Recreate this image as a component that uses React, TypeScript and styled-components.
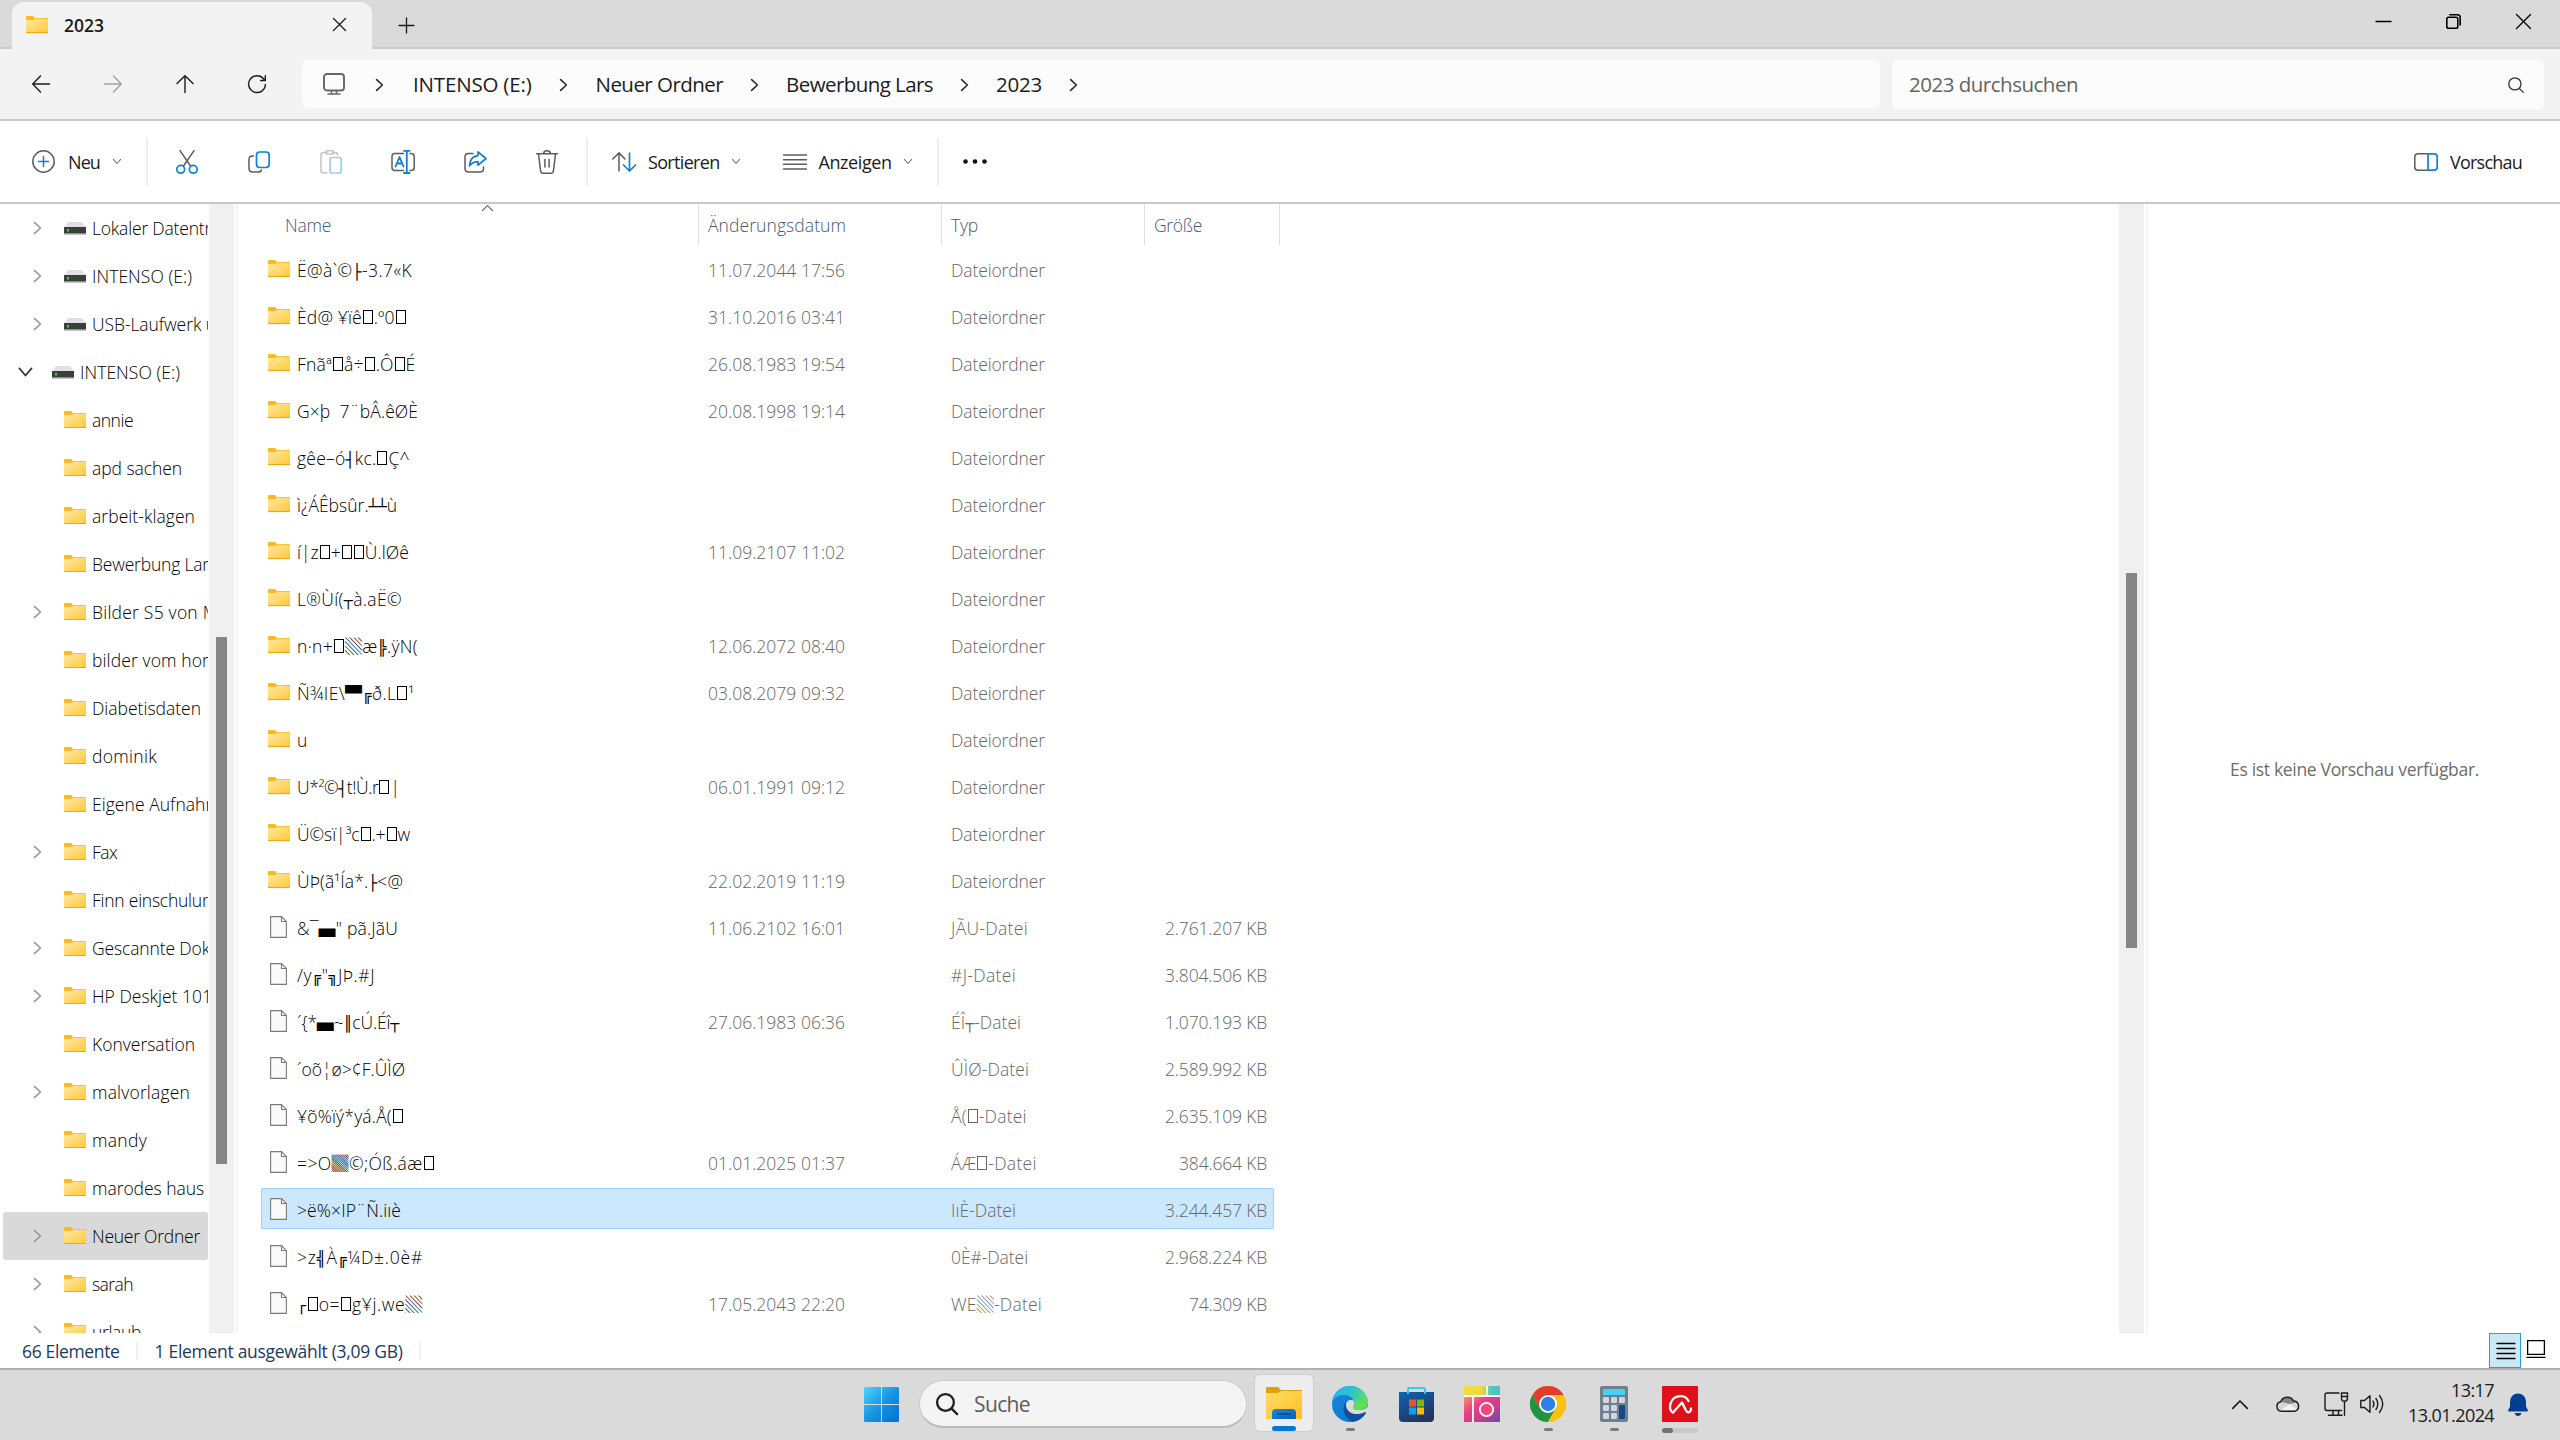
import React, { useLayoutEffect, useRef } from 'react';
import styled, { createGlobalStyle } from 'styled-components';

const UI_FONT = `"Open Sans", "Noto Sans", "Noto Sans CJK JP", sans-serif`;

const Global = createGlobalStyle`
  *, *::before, *::after { box-sizing: border-box; }
  html, body { margin: 0; padding: 0; }
  body { font-family: ${UI_FONT}; background: #fff; overflow: hidden; }
`;

/* ---------- text ---------- */

const Label = styled.span<{ $size: number; $color: string; $weight?: number; $drop?: number }>`
  display: inline-block;
  flex: none;
  white-space: pre;
  font-size: ${(p) => p.$size}px;
  line-height: 1.36;
  font-weight: ${(p) => p.$weight ?? 400};
  color: ${(p) => p.$color};
  margin-top: ${(p) => (p.$drop ?? 0) * 2}px;
`;

const Tofu = styled.span`
  display: inline-block;
  width: 10px;
  height: 14px;
  margin: 0 1px;
  border: 1px solid currentColor;
`;

const LineGlyph = styled.span`
  font-family: "DejaVu Sans Mono", monospace;
  font-size: 15px;
  line-height: 1;
`;

const BlockGlyph = styled.span`
  font-family: "Noto Sans CJK JP", sans-serif;
  font-size: 17px;
  line-height: 1;
`;

const renderGlyphs = (text: string) =>
  Array.from(text).map((ch, i) => {
    if (ch === '□') return <Tofu key={i} />;
    if ('├┤┴┬╠╣╔╗║┌'.includes(ch)) return <LineGlyph key={i}>{ch}</LineGlyph>;
    if ('▀▄▒▓'.includes(ch)) return <BlockGlyph key={i}>{ch}</BlockGlyph>;
    return ch;
  });

interface TextProps {
  children: string;
  size?: number;
  color?: string;
  weight?: number;
  width?: number;
  drop?: number;
}

/* Tracks the letters so that the string takes exactly the given advance width. */
const Text = ({ children, size = 18, color = '#1b1b1b', weight, width, drop }: TextProps) => {
  const ref = useRef<HTMLSpanElement>(null);
  useLayoutEffect(() => {
    const el = ref.current;
    if (!el || !width) return;
    el.style.letterSpacing = '0px';
    el.style.width = 'auto';
    const natural = el.getBoundingClientRect().width;
    el.style.letterSpacing = `${(width - natural) / Array.from(children).length}px`;
    el.style.width = `${width}px`;
  }, [children, width]);
  return (
    <Label ref={ref} $size={size} $color={color} $weight={weight} $drop={drop}>
      {renderGlyphs(children)}
    </Label>
  );
};

/* ---------- icons ---------- */

const Svg = styled.svg`
  display: block;
  flex: none;
  overflow: visible;
`;

interface GlyphProps {
  w: number;
  h: number;
  color?: string;
  sw?: number;
  children: React.ReactNode;
}
const Glyph = ({ w, h, color = '#1b1b1b', sw = 1.5, children }: GlyphProps) => (
  <Svg width={w} height={h} viewBox={`0 0 ${w} ${h}`} fill="none" stroke={color} strokeWidth={sw} strokeLinecap="round" strokeLinejoin="round">
    {children}
  </Svg>
);

const BLUE = '#0f7fd8';
const GREY = '#5c5c5c';

const FolderIcon = () => (
  <Svg width="22" height="18" viewBox="0 0 22 18">
    <defs>
      <linearGradient id="fold" x1="0" y1="0" x2="1" y2="1">
        <stop offset="0" stopColor="#ffe9a2" />
        <stop offset="1" stopColor="#ffc937" />
      </linearGradient>
    </defs>
    <path d="M0 1Q0 0 1 0H7L9 2H22V8H0Z" fill="#fdb81e" />
    <path d="M0 4H7L9 2.8H22V17H0Z" fill="url(#fold)" />
    <path d="M0 16.5H22" stroke="#eea820" strokeWidth="1.2" />
  </Svg>
);

const DriveIcon = () => (
  <Svg width="22" height="13" viewBox="0 0 22 13">
    <path d="M4 0H18L22 5H0Z" fill="#dfe1e4" />
    <rect y="5" width="22" height="7" fill="#3d3d3d" />
    <rect y="11" width="22" height="1.5" fill="#8e8e8e" />
    <rect x="3" y="7" width="2" height="2.5" fill="#2bdc3a" />
  </Svg>
);

const FileIcon = () => (
  <Svg width="17" height="22" viewBox="0 0 17 22" fill="#fafafa" stroke="#7a7a7a" strokeWidth="1.1">
    <path d="M.6 .6H11.5L16.4 5.5V21.4H.6Z" />
    <path d="M11.5 .6V5.5H16.4" fill="none" />
  </Svg>
);

const ChevronRight = ({ color = '#2a2a2a', w = 7, h = 12, sw = 1.6 }: { color?: string; w?: number; h?: number; sw?: number }) => (
  <Glyph w={w} h={h} color={color} sw={sw}>
    <path d={`M.6 .6L${w - 0.6} ${h / 2}L.6 ${h - 0.6}`} />
  </Glyph>
);

const ChevronDown = ({ color = '#777', w = 8, h = 5, sw = 1.1 }: { color?: string; w?: number; h?: number; sw?: number }) => (
  <Glyph w={w} h={h} color={color} sw={sw}>
    <path d={`M.4 .4L${w / 2} ${h - 0.5}L${w - 0.4} .4`} />
  </Glyph>
);

const SearchGlass = ({ size, sw, color }: { size: number; sw: number; color: string }) => (
  <Glyph w={size} h={size} sw={sw} color={color}>
    <circle cx={size * 0.43} cy={size * 0.43} r={size * 0.38} />
    <path d={`M${size * 0.71} ${size * 0.71}L${size * 0.96} ${size * 0.96}`} />
  </Glyph>
);

/* ---------- frame ---------- */

const Screen = styled.div`
  width: 2560px;
  height: 1440px;
  display: flex;
  flex-direction: column;
  overflow: hidden;
  background: #fff;
`;

const TitleBar = styled.header`
  height: 49px;
  flex: none;
  display: flex;
  align-items: stretch;
  background: linear-gradient(#cacaca, #cacaca) bottom / 100% 2px no-repeat #dadada;
`;

const Tab = styled.div`
  margin: 2px 0 0 12px;
  width: 360px;
  display: flex;
  align-items: center;
  padding: 0 26px 2px 14px;
  border-radius: 12px 12px 0 0;
  background: #f3f3f3;
`;

const TabTitle = styled.div`
  flex: 1;
  margin-left: 16px;
  display: flex;
`;

const NewTab = styled.div`
  flex: 1;
  display: flex;
  align-items: center;
  padding: 2px 0 0 27px;
`;

const WindowControls = styled.div`
  display: flex;
  align-items: center;
  gap: 55px;
  padding: 0 29px 6px 0;
`;

const NavBar = styled.nav`
  height: 72px;
  flex: none;
  display: flex;
  align-items: center;
  padding: 0 16px 0 32px;
  background: #f3f3f3;
  border-bottom: 2px solid #c8c8c8;
`;

const NavArrows = styled.div`
  width: 270px;
  display: flex;
  gap: 54px;
`;

const AddressBar = styled.div`
  width: 1578px;
  height: 48px;
  display: flex;
  align-items: center;
  padding-left: 21px;
  border-radius: 6px;
  background: #fcfcfc;
`;

const Crumb = styled.div<{ $gap: number; $lead: number }>`
  display: flex;
  align-items: center;
  gap: ${(p) => p.$gap}px;
  margin-left: ${(p) => p.$lead}px;
  padding-top: 2px;
`;

const SearchField = styled.div`
  margin-left: 12px;
  width: 652px;
  height: 49px;
  display: flex;
  align-items: center;
  justify-content: space-between;
  padding: 2px 20px 0 17px;
  border-radius: 6px;
  background: #fcfcfc;
`;

const Toolbar = styled.div`
  height: 83px;
  flex: none;
  display: flex;
  align-items: center;
  padding: 0 38px 0 32px;
  border-bottom: 2px solid #c8c8c8;
  background: #fff;
`;

const MenuButton = styled.div<{ $lead?: number; $gap?: number }>`
  display: flex;
  align-items: center;
  gap: ${(p) => p.$gap ?? 12}px;
  margin-left: ${(p) => p.$lead ?? 0}px;
`;

const ToolButton = styled.div`
  width: 72px;
  display: flex;
  justify-content: center;
`;

const Divider = styled.div<{ $before: number; $after: number }>`
  width: 2px;
  height: 48px;
  margin: 0 ${(p) => p.$after}px 0 ${(p) => p.$before}px;
  background: #eeeeee;
`;

const Grow = styled.div`
  flex: 1;
`;

const Body = styled.main`
  height: 1129px;
  flex: none;
  display: flex;
  overflow: hidden;
`;

/* ---------- tree ---------- */

const Tree = styled.aside`
  width: 209px;
  overflow: hidden;
`;

const TreeRow = styled.div<{ $root?: boolean; $selected?: boolean }>`
  height: 48px;
  width: 205px;
  margin-left: 3px;
  display: flex;
  align-items: center;
  padding-left: ${(p) => (p.$root ? 16 : 31)}px;
  border-radius: 3px;
  overflow: hidden;
  background: ${(p) => (p.$selected ? '#d9d9d9' : 'transparent')};
`;

const TreeToggle = styled.div<{ $root?: boolean }>`
  width: ${(p) => (p.$root ? 33 : 30)}px;
  flex: none;
`;

const TreeIcon = styled.div`
  width: 28px;
  flex: none;
`;

const Track = styled.div<{ $w: number; $pad: number; $top: number }>`
  width: ${(p) => p.$w}px;
  flex: none;
  padding: ${(p) => p.$top}px ${(p) => p.$pad}px 0;
  background: #f0f0f0;
`;

const Thumb = styled.div<{ $h: number }>`
  width: 11px;
  height: ${(p) => p.$h}px;
  background: #858585;
`;

const Splitter = styled.div`
  width: 2px;
  flex: none;
  margin-left: 2px;
  background: #f5f5f5;
`;

/* ---------- list ---------- */

const List = styled.section`
  width: 1881px;
  flex: none;
  display: flex;
  flex-direction: column;
`;

const HeaderRow = styled.div`
  height: 44px;
  flex: none;
  display: flex;
`;

const HeaderCell = styled.div<{ $w: number; $pad: number }>`
  width: ${(p) => p.$w}px;
  height: 41px;
  display: flex;
  align-items: center;
  padding-left: ${(p) => p.$pad}px;
  border-right: 1px solid #e0e0e0;
`;

const SortMark = styled.div`
  align-self: flex-start;
  margin: 1px 0 0 151px;
`;

const Row = styled.div<{ $selected?: boolean }>`
  width: 1013px;
  height: 41px;
  flex: none;
  margin: 0 0 6px 23px;
  display: grid;
  grid-template-columns: 36px 411px 243px 213px 1fr;
  align-items: center;
  border-radius: 2px;
  background: ${(p) => (p.$selected ? '#cce8ff' : 'transparent')};
  box-shadow: ${(p) => (p.$selected ? 'inset 0 0 0 1px #99d1ff' : 'none')};
`;

const RowIcon = styled.div<{ $file?: boolean }>`
  padding-left: ${(p) => (p.$file ? 9 : 7)}px;
`;

const Cell = styled.div`
  height: 41px;
  display: flex;
  align-items: center;
`;

const PreviewPane = styled.section`
  flex: 1;
  display: flex;
  align-items: center;
  justify-content: center;
  padding-left: 1px;
`;

/* ---------- status ---------- */

const StatusBar = styled.footer`
  height: 35px;
  flex: none;
  display: flex;
  align-items: center;
  padding: 0 15px 0 22px;
`;

const StatusRule = styled.div`
  width: 2px;
  height: 18px;
  margin: 0 17px 0 16px;
  background: #f0f0f0;
`;

const DetailsToggle = styled.div`
  width: 32px;
  height: 35px;
  display: flex;
  align-items: center;
  justify-content: center;
  padding: 1px 0 0 1px;
  border: 1px solid #26a0da;
  background: #cbe8f6;
`;

const TilesToggle = styled.div`
  width: 18px;
  margin-left: 6px;
  padding-bottom: 3px;
`;

/* ---------- taskbar ---------- */

const Taskbar = styled.footer`
  height: 72px;
  flex: none;
  display: flex;
  align-items: flex-start;
  padding: 0 32px 0 864px;
  border-top: 2px solid #b0b0b0;
  background: #dadada;
`;

const StartButton = styled.div`
  padding-top: 17px;
`;

const SearchPill = styled.div`
  margin: 10px 0 0 20px;
  width: 328px;
  height: 48px;
  display: flex;
  align-items: center;
  gap: 16px;
  padding: 1px 0 0 16px;
  border-radius: 24px;
  border: 1px solid #cbcbcb;
  border-bottom: 2px solid #b9b9b9;
  background: #f4f4f4;
`;

const Apps = styled.div`
  display: flex;
  margin-left: 7px;
  padding-top: 4px;
`;

const AppSlot = styled.div<{ $active?: boolean }>`
  width: 60px;
  height: 58px;
  margin-right: 6px;
  display: flex;
  flex-direction: column;
  align-items: center;
  justify-content: flex-start;
  padding-top: 11px;
  border-radius: 6px;
  border: 1.5px solid ${(p) => (p.$active ? '#cfcfcf' : 'transparent')};
  background: ${(p) => (p.$active ? '#ededed' : 'transparent')};
  background-clip: padding-box;
`;

const AppArt = styled.div`
  height: 36px;
  display: flex;
  align-items: center;
`;

const Running = styled.div<{ $w: number; $color: string }>`
  width: ${(p) => p.$w}px;
  height: 5px;
  margin-top: 6px;
  border-radius: 3px;
  background: ${(p) => p.$color};
`;

const RunningGroup = styled.div`
  width: 36px;
  height: 5px;
  margin-top: 6px;
  border-radius: 3px;
  background: #c9c9c9;
`;

const RunningActive = styled.div`
  width: 11px;
  height: 5px;
  border-radius: 3px;
  background: #717171;
`;

const Tray = styled.div`
  flex: 1;
  height: 70px;
  display: flex;
  align-items: center;
  justify-content: flex-end;
`;

const TrayItem = styled.div<{ $after: number; $up?: number }>`
  margin-right: ${(p) => p.$after}px;
  padding-bottom: ${(p) => p.$up ?? 2}px;
`;

const Clock = styled.div`
  width: 86px;
  display: flex;
  flex-direction: column;
  align-items: flex-end;
  padding-bottom: 5px;
`;

const BellFrame = styled.div`
  margin-left: 14px;
  padding-bottom: 2px;
`;

/* ---------- app icons ---------- */

const WindowsLogo = () => (
  <Svg width="35" height="35" viewBox="0 0 35 35">
    <defs>
      <linearGradient id="win" gradientUnits="userSpaceOnUse" x1="0" y1="0" x2="35" y2="35">
        <stop offset="0" stopColor="#4fd3ff" />
        <stop offset=".5" stopColor="#1795e0" />
        <stop offset="1" stopColor="#0070d1" />
      </linearGradient>
    </defs>
    <g fill="url(#win)">
      <path d="M1.5 0H17V17H0V1.5Q0 0 1.5 0Z" />
      <path d="M18 0H33.5Q35 0 35 1.5V17H18Z" />
      <path d="M0 18H17V35H1.5Q0 35 0 33.5Z" />
      <path d="M18 18H35V33.5Q35 35 33.5 35H18Z" />
    </g>
  </Svg>
);

const ExplorerApp = () => (
  <Svg width="36" height="33" viewBox="0 0 36 33">
    <defs>
      <linearGradient id="expBack" x1="0" y1="0" x2="1" y2="1">
        <stop offset="0" stopColor="#ffdc6b" />
        <stop offset="1" stopColor="#ffc01e" />
      </linearGradient>
      <linearGradient id="expBlue" x1="0" y1="0" x2="1" y2="1">
        <stop offset="0" stopColor="#1b8ad8" />
        <stop offset="1" stopColor="#0a5fb4" />
      </linearGradient>
    </defs>
    <path d="M0 1Q0 0 1 0H12L15 3H36V8H0Z" fill="#e0a00a" />
    <path d="M0 6H12L15 4H36V32H0Z" fill="url(#expBack)" />
    <path d="M6 32V26Q6 22 10 22H26Q30 22 30 26V32Z" fill="url(#expBlue)" />
    <path d="M11 27H25" stroke="#0a4a8c" strokeWidth="1.6" />
  </Svg>
);

const EdgeApp = () => (
  <Svg width="36" height="36" viewBox="0 0 36 36">
    <defs>
      <linearGradient id="edTop" x1="0" y1=".3" x2="1" y2=".6">
        <stop offset="0" stopColor="#2ab4f2" />
        <stop offset=".5" stopColor="#2cc3cf" />
        <stop offset="1" stopColor="#6be34b" />
      </linearGradient>
      <linearGradient id="edMid" x1="0" y1="0" x2=".5" y2="1">
        <stop offset="0" stopColor="#1586d8" />
        <stop offset="1" stopColor="#0b7cd6" />
      </linearGradient>
    </defs>
    <circle cx="18" cy="18" r="18" fill="url(#edMid)" />
    <path d="M0 17C1 7 9 0 18 0C28 0 36 8 36 16C36 21 32 24 27 24C23 24 21 23 21 21.5C21 20.5 22.5 20 22.5 17.5C22 12 17 9 11 9C5 9 1 13 0 17Z" fill="url(#edTop)" />
    <path d="M14 16C9 22 12 31 20 35.7C26 35.5 31 32 33.5 27.5C34 26.5 33.4 26 32.5 26.5C25 30 15 27 14 19Z" fill="#114f9c" />
    <path d="M22 15C18 12.5 14 15 14 19C14 25 20 28.5 26 28C29 27.7 31 27 33 26C34 26 34.5 26.5 36 25L36 20C34 23 31 24 27 24C23 24 21 23 21 21.5C21 20.5 23 19 22 15Z" fill="#dadada" />
    <path d="M36 16C36 21 32 24 27 24C23 24 21 23 21 21.5C21 20.5 22.5 20 22.5 17.5L28 14Z" fill="#5fdf55" />
  </Svg>
);

const StoreApp = () => (
  <Svg width="35" height="35" viewBox="0 0 35 35">
    <defs>
      <linearGradient id="sto" x1="0" y1="0" x2=".6" y2="1">
        <stop offset="0" stopColor="#0d66b5" />
        <stop offset="1" stopColor="#22345c" />
      </linearGradient>
    </defs>
    <path d="M0 5H35V31Q35 35 31 35H4Q0 35 0 31Z" fill="url(#sto)" />
    <path d="M9 7V2Q9 1 10 1H25Q26 1 26 2V7" fill="none" stroke="#3cc4f4" strokeWidth="2" />
    <rect x="10" y="12.5" width="7" height="7" fill="#f25022" />
    <rect x="18" y="12.5" width="7" height="7" fill="#7fba00" />
    <rect x="10" y="20.5" width="7" height="7" fill="#00a4ef" />
    <rect x="18" y="20.5" width="7" height="7" fill="#ffb900" />
  </Svg>
);

const CollageApp = () => (
  <Svg width="36" height="36" viewBox="0 0 36 36">
    <defs>
      <linearGradient id="colA" x1="0" y1="0" x2="1" y2="0">
        <stop offset="0" stopColor="#f7da40" />
        <stop offset=".5" stopColor="#e8dc3c" />
        <stop offset=".75" stopColor="#4cc9be" />
        <stop offset="1" stopColor="#53bfc4" />
      </linearGradient>
      <linearGradient id="colB" x1="0" y1="0" x2="1" y2="1">
        <stop offset="0" stopColor="#f79a5e" />
        <stop offset=".35" stopColor="#ee3f86" />
        <stop offset=".65" stopColor="#c43f8b" />
        <stop offset="1" stopColor="#6a4ba8" />
      </linearGradient>
    </defs>
    <rect width="36" height="10" fill="url(#colA)" />
    <rect y="10" width="36" height="26" fill="url(#colB)" />
    <path d="M0 10H36M9 10V36M23 0V10" stroke="#fff" strokeWidth="1.8" />
    <circle cx="22.5" cy="23.5" r="6.7" fill="#f4497a" stroke="#fff" strokeWidth="1.8" />
  </Svg>
);

const ChromeApp = () => (
  <Svg width="36" height="36" viewBox="0 0 36 36">
    <circle cx="18" cy="18" r="18" fill="#fbc116" />
    <path d="M2.4 9A18 18 0 0 1 33.6 9L18 9L10.2 22.5Z" fill="#e33b2e" />
    <path d="M2.4 9A18 18 0 0 0 18 36L25.8 22.5L10.2 22.5Z" fill="#229342" />
    <path d="M33.6 9A18 18 0 0 1 18 36L25.8 22.5L18 9Z" fill="#fbc116" />
    <circle cx="18" cy="18" r="9" fill="#fff" />
    <circle cx="18" cy="18" r="7.2" fill="#2f7de9" />
  </Svg>
);

const CalcApp = () => (
  <Svg width="28" height="36" viewBox="0 0 28 36">
    <rect width="28" height="36" rx="2" fill="#70808c" />
    <rect x="3" y="3" width="22" height="6" rx="1" fill="#45d2f7" />
    <g fill="#cfd6e0">
      <rect x="3" y="11" width="6" height="6" rx="1.2" />
      <rect x="11" y="11" width="6" height="6" rx="1.2" />
      <rect x="19" y="11" width="6" height="6" rx="1.2" />
      <rect x="3" y="19" width="6" height="6" rx="1.2" />
      <rect x="11" y="19" width="6" height="6" rx="1.2" />
      <rect x="3" y="27" width="6" height="6" rx="1.2" />
      <rect x="11" y="27" width="6" height="6" rx="1.2" />
    </g>
    <rect x="19" y="19" width="6" height="14" rx="1.2" fill="#124a8c" />
  </Svg>
);

const AviraApp = () => (
  <Svg width="36" height="36" viewBox="0 0 36 36">
    <rect width="36" height="36" rx="1" fill="#e00f1a" />
    <g fill="none" stroke="#fff" strokeWidth="2.3" strokeLinecap="round" strokeLinejoin="round">
      <path d="M11 26.5C5 24 8 10.2 18.5 10.2C22.5 10.2 25 12 26.5 15" />
      <path d="M11 26.5L20 16.5L24 24.5C25.5 27.5 29 26.5 29 22.5" />
    </g>
  </Svg>
);

const BellIcon = () => (
  <BellFrame>
    <Svg width="20" height="23" viewBox="0 0 20 23" fill="#003e92">
      <path d="M2 8.5A8 8 0 0 1 18 8.5V13.5L20 17.5Q20 18.5 19 18.5H1Q0 18.5 0 17.5L2 13.5Z" />
      <path d="M6.5 20H13.5Q12.5 23 10 23Q7.5 23 6.5 20Z" />
    </Svg>
  </BellFrame>
);

/* ---------- data ---------- */

type TreeItem = { name: string; width: number; drive?: boolean; root?: boolean; toggle?: boolean; selected?: boolean };

const tree: TreeItem[] = [
  { name: 'Lokaler Datentr', width: 119, drive: true, toggle: true },
  { name: 'INTENSO (E:)', width: 100, drive: true, toggle: true },
  { name: 'USB-Laufwerk u', width: 124, drive: true, toggle: true },
  { name: 'INTENSO (E:)', width: 100, drive: true, toggle: true, root: true },
  { name: 'annie', width: 41 },
  { name: 'apd sachen', width: 90 },
  { name: 'arbeit-klagen', width: 103 },
  { name: 'Bewerbung Lar', width: 117 },
  { name: 'Bilder S5 von M', width: 126, toggle: true },
  { name: 'bilder vom hor', width: 117 },
  { name: 'Diabetisdaten', width: 109 },
  { name: 'dominik', width: 65 },
  { name: 'Eigene Aufnahm', width: 129 },
  { name: 'Fax', width: 25, toggle: true },
  { name: 'Finn einschulun', width: 120 },
  { name: 'Gescannte Dok', width: 118, toggle: true },
  { name: 'HP Deskjet 101', width: 120, toggle: true },
  { name: 'Konversation', width: 103 },
  { name: 'malvorlagen', width: 98, toggle: true },
  { name: 'mandy', width: 55 },
  { name: 'marodes haus', width: 112 },
  { name: 'Neuer Ordner', width: 108, toggle: true, selected: true },
  { name: 'sarah', width: 41, toggle: true },
  { name: 'urlaub', width: 49, toggle: true },
];

type Entry = {
  name: string;
  w: number;
  date?: string;
  type?: string;
  typeW?: number;
  size?: string;
  sizeW?: number;
  selected?: boolean;
};

const entries: Entry[] = [
  { name: 'Ë@à`©├-3.7«K', w: 115, date: '11.07.2044 17:56' },
  { name: 'Èd@ ¥ïê□.º0□', w: 110, date: '31.10.2016 03:41' },
  { name: 'Fnãª□å÷□.Ô□É', w: 119, date: '26.08.1983 19:54' },
  { name: 'G×þ  7¨bÂ.êØÈ', w: 121, date: '20.08.1998 19:14' },
  { name: 'gêe–ó┤kc.□Ç^', w: 113 },
  { name: 'ì¿ÁÊbsûr.┴┴ù', w: 100 },
  { name: 'í|z□+□□Ù.lØê', w: 112, date: '11.09.2107 11:02' },
  { name: 'L®Ùí(┬à.aË©', w: 105 },
  { name: 'n·n+□▒æ╠.ÿN(', w: 121, date: '12.06.2072 08:40' },
  { name: 'Ñ¾IE\\▀╔ð.L□¹', w: 118, date: '03.08.2079 09:32' },
  { name: 'u', w: 10 },
  { name: 'U*²©┤t!Ù.r□|', w: 102, date: '06.01.1991 09:12' },
  { name: 'Ü©sï|³c□.+□w', w: 113 },
  { name: 'ÙÞ(ã¹Ía*.├<@', w: 106, date: '22.02.2019 11:19' },
  { name: '&¯▄" pã.JãU', w: 101, date: '11.06.2102 16:01', type: 'JÃU-Datei', typeW: 77, size: '2.761.207 KB', sizeW: 102 },
  { name: '/y╔"╗JÞ.#J', w: 78, type: '#J-Datei', typeW: 65, size: '3.804.506 KB', sizeW: 102 },
  { name: '´{*▄~║cÚ.Éî┬', w: 102, date: '27.06.1983 06:36', type: 'ÉÎ┬-Datei', typeW: 70, size: '1.070.193 KB', sizeW: 102 },
  { name: '´oõ¦ø>¢F.ÛÌØ', w: 108, type: 'ÛÌØ-Datei', typeW: 78, size: '2.589.992 KB', sizeW: 102 },
  { name: '¥õ%ïý*yá.Å(□', w: 107, type: 'Å(□-Datei', typeW: 76, size: '2.635.109 KB', sizeW: 102 },
  { name: '=>O▓©;Óß.áæ□', w: 138, date: '01.01.2025 01:37', type: 'ÁÆ□-Datei', typeW: 86, size: '384.664 KB', sizeW: 88 },
  { name: '>ë%×IP¨Ñ.iıè', w: 104, type: 'IıÈ-Datei', typeW: 65, size: '3.244.457 KB', sizeW: 102, selected: true },
  { name: '>z╣À╔¼D±.0è#', w: 126, type: '0È#-Datei', typeW: 77, size: '2.968.224 KB', sizeW: 102 },
  { name: '┌□o=□g¥j.we▒', w: 127, date: '17.05.2043 22:20', type: 'WE▒-Datei', typeW: 91, size: '74.309 KB', sizeW: 78 },
];

const SizeCell = styled(Cell)`
  justify-content: flex-end;
  padding-right: 7px;
`;

const LIST_SIZE = 17.5;
const LIST_WEIGHT = 350;

/* ---------- page ---------- */

export default function App() {
  const heading = '#44597a';
  const dim = '#666';
  const status = '#1e395b';
  return (
    <Screen>
      <Global />
      <TitleBar>
        <Tab>
          <FolderIcon />
          <TabTitle>
            <Text size={17.5} weight={600} width={40} drop={1}>2023</Text>
          </TabTitle>
          <Glyph w={13} h={13} sw={1.3}><path d="M.5 .5L12.5 12.5M12.5 .5L.5 12.5" /></Glyph>
        </Tab>
        <NewTab>
          <Glyph w={15} h={15} sw={1.3}><path d="M7.5 0V15M0 7.5H15" /></Glyph>
        </NewTab>
        <WindowControls>
          <Glyph w={15} h={15} sw={1.4} color="#000"><path d="M0 7.5H15" /></Glyph>
          <Glyph w={15} h={15} sw={1.6} color="#000">
            <rect x=".8" y="3.3" width="11" height="11" rx="1.8" />
            <path d="M3.8 .8H11.5Q14.2 .8 14.2 3.5V11" />
          </Glyph>
          <Glyph w={15} h={15} sw={1.4} color="#000"><path d="M.5 .5L14.5 14.5M14.5 .5L.5 14.5" /></Glyph>
        </WindowControls>
      </TitleBar>

      <NavBar>
        <NavArrows>
          <Glyph w={18} h={18} sw={1.4}><path d="M17.5 9H.8M8.5 1L.7 9L8.5 17" /></Glyph>
          <Glyph w={18} h={18} sw={1.4} color="#a0a0a0"><path d="M.5 9H17.2M9.5 1L17.3 9L9.5 17" /></Glyph>
          <Glyph w={18} h={18} sw={1.4}><path d="M9 17.5V.8M1 8.5L9 .7L17 8.5" /></Glyph>
          <Glyph w={18} h={18} sw={1.4}>
            <path d="M17.4 9.5A8.4 8.4 0 1 1 15.5 3.8L17.3 5.5M17.3 .8V5.5H12.6" />
          </Glyph>
        </NavArrows>
        <AddressBar>
          <Glyph w={22} h={22} sw={1.9} color="#666">
            <rect x="1" y="1" width="20" height="16.5" rx="3" />
            <path d="M5 21H17M8.5 17.5V21M13.5 17.5V21" strokeWidth="1.5" />
          </Glyph>
          <Crumb $gap={30} $lead={31}>
            <ChevronRight />
            <Text size={20.5} width={118.5}>INTENSO (E:)</Text>
          </Crumb>
          <Crumb $gap={29} $lead={28}>
            <ChevronRight />
            <Text size={20.5} width={127.5}>Neuer Ordner</Text>
          </Crumb>
          <Crumb $gap={28} $lead={28}>
            <ChevronRight />
            <Text size={20.5} width={147}>Bewerbung Lars</Text>
          </Crumb>
          <Crumb $gap={28} $lead={28}>
            <ChevronRight />
            <Text size={20.5} width={46}>2023</Text>
            <ChevronRight />
          </Crumb>
        </AddressBar>
        <SearchField>
          <Text size={20.5} width={169} color="#636363">2023 durchsuchen</Text>
          <SearchGlass size={16} sw={1.3} color="#333" />
        </SearchField>
      </NavBar>

      <Toolbar>
        <MenuButton $gap={13}>
          <Glyph w={23} h={23} color={GREY} sw={1.5}>
            <circle cx="11.5" cy="11.5" r="10.7" />
            <path d="M11.5 6.5V16.5M6.5 11.5H16.5" stroke={BLUE} />
          </Glyph>
          <Text size={18} width={32} drop={1}>Neu</Text>
          <ChevronDown />
        </MenuButton>
        <Divider $before={25} $after={3} />
        <ToolButton>
          <Glyph w={22} h={24} color={GREY}>
            <path d="M4 .7L14.5 16M18 .7L7.5 16" />
            <circle cx="4.7" cy="19.3" r="3.9" stroke={BLUE} strokeWidth="1.7" />
            <circle cx="17.3" cy="19.3" r="3.9" stroke={BLUE} strokeWidth="1.7" />
          </Glyph>
        </ToolButton>
        <ToolButton>
          <Glyph w={22} h={22} color={GREY}>
            <path d="M5.5 5H4.5Q1 5 1 8.5V17.5Q1 21 4.5 21H10Q13 21 13.5 19" />
            <rect x="8.5" y="1" width="12.7" height="15.5" rx="3.2" stroke={BLUE} strokeWidth="1.7" />
          </Glyph>
        </ToolButton>
        <ToolButton>
          <Glyph w={22} h={24} color="#c4c4c4">
            <path d="M7 2.5H3.5Q1 2.5 1 5V20.5Q1 23 3.5 23H7M12.5 2.5H15Q17.5 2.5 17.5 5" />
            <rect x="5.8" y=".8" width="8" height="3.2" rx="1.6" />
            <rect x="10" y="7.5" width="11.2" height="15.5" rx="2" stroke="#9ccdf2" strokeWidth="1.7" />
          </Glyph>
        </ToolButton>
        <ToolButton>
          <Glyph w={24} h={24} color={GREY}>
            <path d="M12.5 3.5H4Q1 3.5 1 6.5V17.5Q1 20.5 4 20.5H12.5M19 3.5H20Q23.2 3.5 23.2 6.5V17.5Q23.2 20.5 20 20.5H19" />
            <path d="M4.5 16.5L8.5 7L12.5 16.5M5.8 13.5H11.2M15.8 .9V23M13 .9H18.6M13 23H18.6" stroke={BLUE} strokeWidth="1.8" />
          </Glyph>
        </ToolButton>
        <ToolButton>
          <Glyph w={23} h={22} color={GREY}>
            <path d="M9 2.5H4.5Q1 2.5 1 6V17.5Q1 21 4.5 21H16Q19.5 21 19.5 17.5V16" />
            <path d="M14 .8L22 7.5L14 14.2V10.6Q8.5 10.6 5.5 14.8Q6 5.5 14 4.6Z" stroke={BLUE} strokeWidth="1.7" />
          </Glyph>
        </ToolButton>
        <ToolButton>
          <Glyph w={22} h={24} color={GREY}>
            <path d="M.7 3.8H21.3M7.5 3.5Q8 .8 11 .8Q14 .8 14.5 3.5M2.5 4L4.6 21Q4.9 23.2 7 23.2H15Q17.1 23.2 17.4 21L19.5 4M8.9 9.5V17M13.1 9.5V17" />
          </Glyph>
        </ToolButton>
        <Divider $before={3} $after={24} />
        <MenuButton>
          <Glyph w={24} h={20} color={GREY}>
            <path d="M7 19V1M.8 7L7 .9L13 7" />
            <path d="M17.5 1V19M11.5 13L17.5 19L23.5 13" stroke={BLUE} strokeWidth="1.7" />
          </Glyph>
          <Text size={18} width={71.5} drop={1}>Sortieren</Text>
          <ChevronDown />
        </MenuButton>
        <MenuButton $lead={43}>
          <Glyph w={24} h={16} color={GREY} sw={1.4}>
            <path d="M.5 1H23.5M.5 5.7H23.5M.5 10.3H23.5M.5 15H23.5" />
          </Glyph>
          <Text size={18} width={73} drop={1}>Anzeigen</Text>
          <ChevronDown />
        </MenuButton>
        <Divider $before={25} $after={24} />
        <Svg width="24" height="5" viewBox="0 0 24 5" fill="#111">
          <circle cx="2.5" cy="2.5" r="2.3" />
          <circle cx="12" cy="2.5" r="2.3" />
          <circle cx="21.5" cy="2.5" r="2.3" />
        </Svg>
        <Grow />
        <MenuButton $gap={12}>
          <Glyph w={24} h={18} color={GREY}>
            <path d="M14 .8H4Q.8 .8 .8 4V14Q.8 17.2 4 17.2H14" />
            <path d="M14 .8H20Q23.2 .8 23.2 4V14Q23.2 17.2 20 17.2H14Z" stroke={BLUE} strokeWidth="1.7" />
          </Glyph>
          <Text size={18} width={72} drop={1}>Vorschau</Text>
        </MenuButton>
      </Toolbar>

      <Body>
        <Tree>
          {tree.map((item, i) => (
            <TreeRow key={i} $root={item.root} $selected={item.selected}>
              <TreeToggle $root={item.root}>
                {item.toggle &&
                  (item.root ? <ChevronDown w={13} h={8} sw={1.7} color="#333" /> : <ChevronRight color="#999" w={7} h={12} sw={1.7} />)}
              </TreeToggle>
              <TreeIcon>{item.drive ? <DriveIcon /> : <FolderIcon />}</TreeIcon>
              <Text size={LIST_SIZE} weight={LIST_WEIGHT} color="#000" width={item.width} drop={1}>{item.name}</Text>
            </TreeRow>
          ))}
        </Tree>
        <Track $w={25} $pad={7} $top={433}><Thumb $h={527} /></Track>
        <Splitter />

        <List>
          <HeaderRow>
            <HeaderCell $w={461} $pad={47}>
              <Text size={LIST_SIZE} weight={LIST_WEIGHT} color={heading} width={46} drop={1.5}>Name</Text>
              <SortMark>
                <Glyph w={11} h={6} sw={1.1} color="#666"><path d="M.5 5.5L5.5 .7L10.5 5.5" /></Glyph>
              </SortMark>
            </HeaderCell>
            <HeaderCell $w={243} $pad={9}><Text size={LIST_SIZE} weight={LIST_WEIGHT} color={heading} width={138} drop={1.5}>Änderungsdatum</Text></HeaderCell>
            <HeaderCell $w={203} $pad={9}><Text size={LIST_SIZE} weight={LIST_WEIGHT} color={heading} width={27} drop={1.5}>Typ</Text></HeaderCell>
            <HeaderCell $w={135} $pad={9}><Text size={LIST_SIZE} weight={LIST_WEIGHT} color={heading} width={48} drop={1.5}>Größe</Text></HeaderCell>
          </HeaderRow>
          {entries.map((e) => (
            <Row key={e.name} $selected={e.selected}>
              <RowIcon $file={!!e.type}>{e.type ? <FileIcon /> : <FolderIcon />}</RowIcon>
              <Cell><Text size={LIST_SIZE} weight={LIST_WEIGHT} color="#000" width={e.w} drop={2}>{e.name}</Text></Cell>
              <Cell>{e.date && <Text size={LIST_SIZE} weight={LIST_WEIGHT} color={dim} width={137} drop={2}>{e.date}</Text>}</Cell>
              <Cell><Text size={LIST_SIZE} weight={LIST_WEIGHT} color={dim} width={e.typeW ?? 94} drop={2}>{e.type ?? 'Dateiordner'}</Text></Cell>
              <SizeCell>{e.size && <Text size={LIST_SIZE} weight={LIST_WEIGHT} color={dim} width={e.sizeW} drop={2}>{e.size}</Text>}</SizeCell>
            </Row>
          ))}
        </List>
        <Track $w={25} $pad={7} $top={369}><Thumb $h={375} /></Track>
        <Splitter />
        <PreviewPane>
          <Text size={17.5} width={249} color="#6d6d6d" drop={1}>Es ist keine Vorschau verfügbar.</Text>
        </PreviewPane>
      </Body>

      <StatusBar>
        <Text size={17.5} width={97.5} color={status} drop={1.5}>66 Elemente</Text>
        <StatusRule />
        <Text size={17.5} width={248} color={status} drop={1.5}>1 Element ausgewählt (3,09 GB)</Text>
        <StatusRule />
        <Grow />
        <DetailsToggle>
          <Glyph w={18} h={16} sw={1.3} color="#000"><path d="M0 .5H18M0 5.5H18M0 10.5H18M0 15.5H18" /></Glyph>
        </DetailsToggle>
        <TilesToggle>
          <Glyph w={18} h={18} sw={1.3} color="#000">
            <rect x=".6" y=".6" width="16.8" height="13.8" />
            <path d="M0 17.4H18" />
          </Glyph>
        </TilesToggle>
      </StatusBar>

      <Taskbar>
        <StartButton><WindowsLogo /></StartButton>
        <SearchPill>
          <SearchGlass size={22} sw={2.3} color="#1d1d1d" />
          <Text size={21} width={56} color="#5d5d5d">Suche</Text>
        </SearchPill>
        <Apps>
          <AppSlot $active><AppArt><ExplorerApp /></AppArt><Running $w={24} $color="#0078d7" /></AppSlot>
          <AppSlot><AppArt><EdgeApp /></AppArt><Running $w={9} $color="#7b7b7b" /></AppSlot>
          <AppSlot><AppArt><StoreApp /></AppArt></AppSlot>
          <AppSlot><AppArt><CollageApp /></AppArt></AppSlot>
          <AppSlot><AppArt><ChromeApp /></AppArt><Running $w={9} $color="#7b7b7b" /></AppSlot>
          <AppSlot><AppArt><CalcApp /></AppArt><Running $w={9} $color="#7b7b7b" /></AppSlot>
          <AppSlot><AppArt><AviraApp /></AppArt><RunningGroup><RunningActive /></RunningGroup></AppSlot>
        </Apps>
        <Tray>
          <TrayItem $after={28}>
            <Glyph w={16} h={9} sw={1.7}><path d="M.7 8.3L8 1L15.3 8.3" /></Glyph>
          </TrayItem>
          <TrayItem $after={24}>
            <Svg width="24" height="16" viewBox="0 0 24 16">
              <path d="M5.5 15.2A4.8 4.8 0 0 1 4.8 5.7A7 7 0 0 1 17.5 5A5.2 5.2 0 0 1 18.8 15.2Z" fill="#d4d4d4" />
              <path d="M4.8 5.7A7 7 0 0 1 17.5 5L20 6.5L14 8Z" fill="#858585" />
              <path d="M4 14.5L14 8L21 13.5L18.8 15.2H5.5Z" fill="#f2f2f2" />
              <path d="M5.5 15.2A4.8 4.8 0 0 1 4.8 5.7A7 7 0 0 1 17.5 5A5.2 5.2 0 0 1 18.8 15.2Z" fill="none" stroke="#1b1b1b" strokeWidth="1.5" />
            </Svg>
          </TrayItem>
          <TrayItem $after={11}>
            <Glyph w={25} h={24} sw={1.4}>
              <path d="M15 1H3Q1 1 1 3V16Q1 18.5 3 18.5H17.5M4.5 23.3H18M9 18.5V23.3M14.5 18.5V23.3" />
              <path d="M17.5 1H23.5V6Q23.5 9.3 20.5 9.3Q17.5 9.3 17.5 6ZM17.5 4.5H23.5M20.5 9.3V23.3" />
            </Glyph>
          </TrayItem>
          <TrayItem $after={24}>
            <Glyph w={24} h={20} sw={1.4}>
              <path d="M.8 6.5H4.5L10 1.8V18.2L4.5 13.5H.8Z" />
              <path d="M13 7Q14.8 10 13 13M16 4.5Q19.5 10 16 15.5M19.5 1.5Q26 10 19.5 18.5" />
            </Glyph>
          </TrayItem>
          <Clock>
            <Text size={18} width={43}>13:17</Text>
            <Text size={18} width={86}>13.01.2024</Text>
          </Clock>
          <BellIcon />
        </Tray>
      </Taskbar>
    </Screen>
  );
}
